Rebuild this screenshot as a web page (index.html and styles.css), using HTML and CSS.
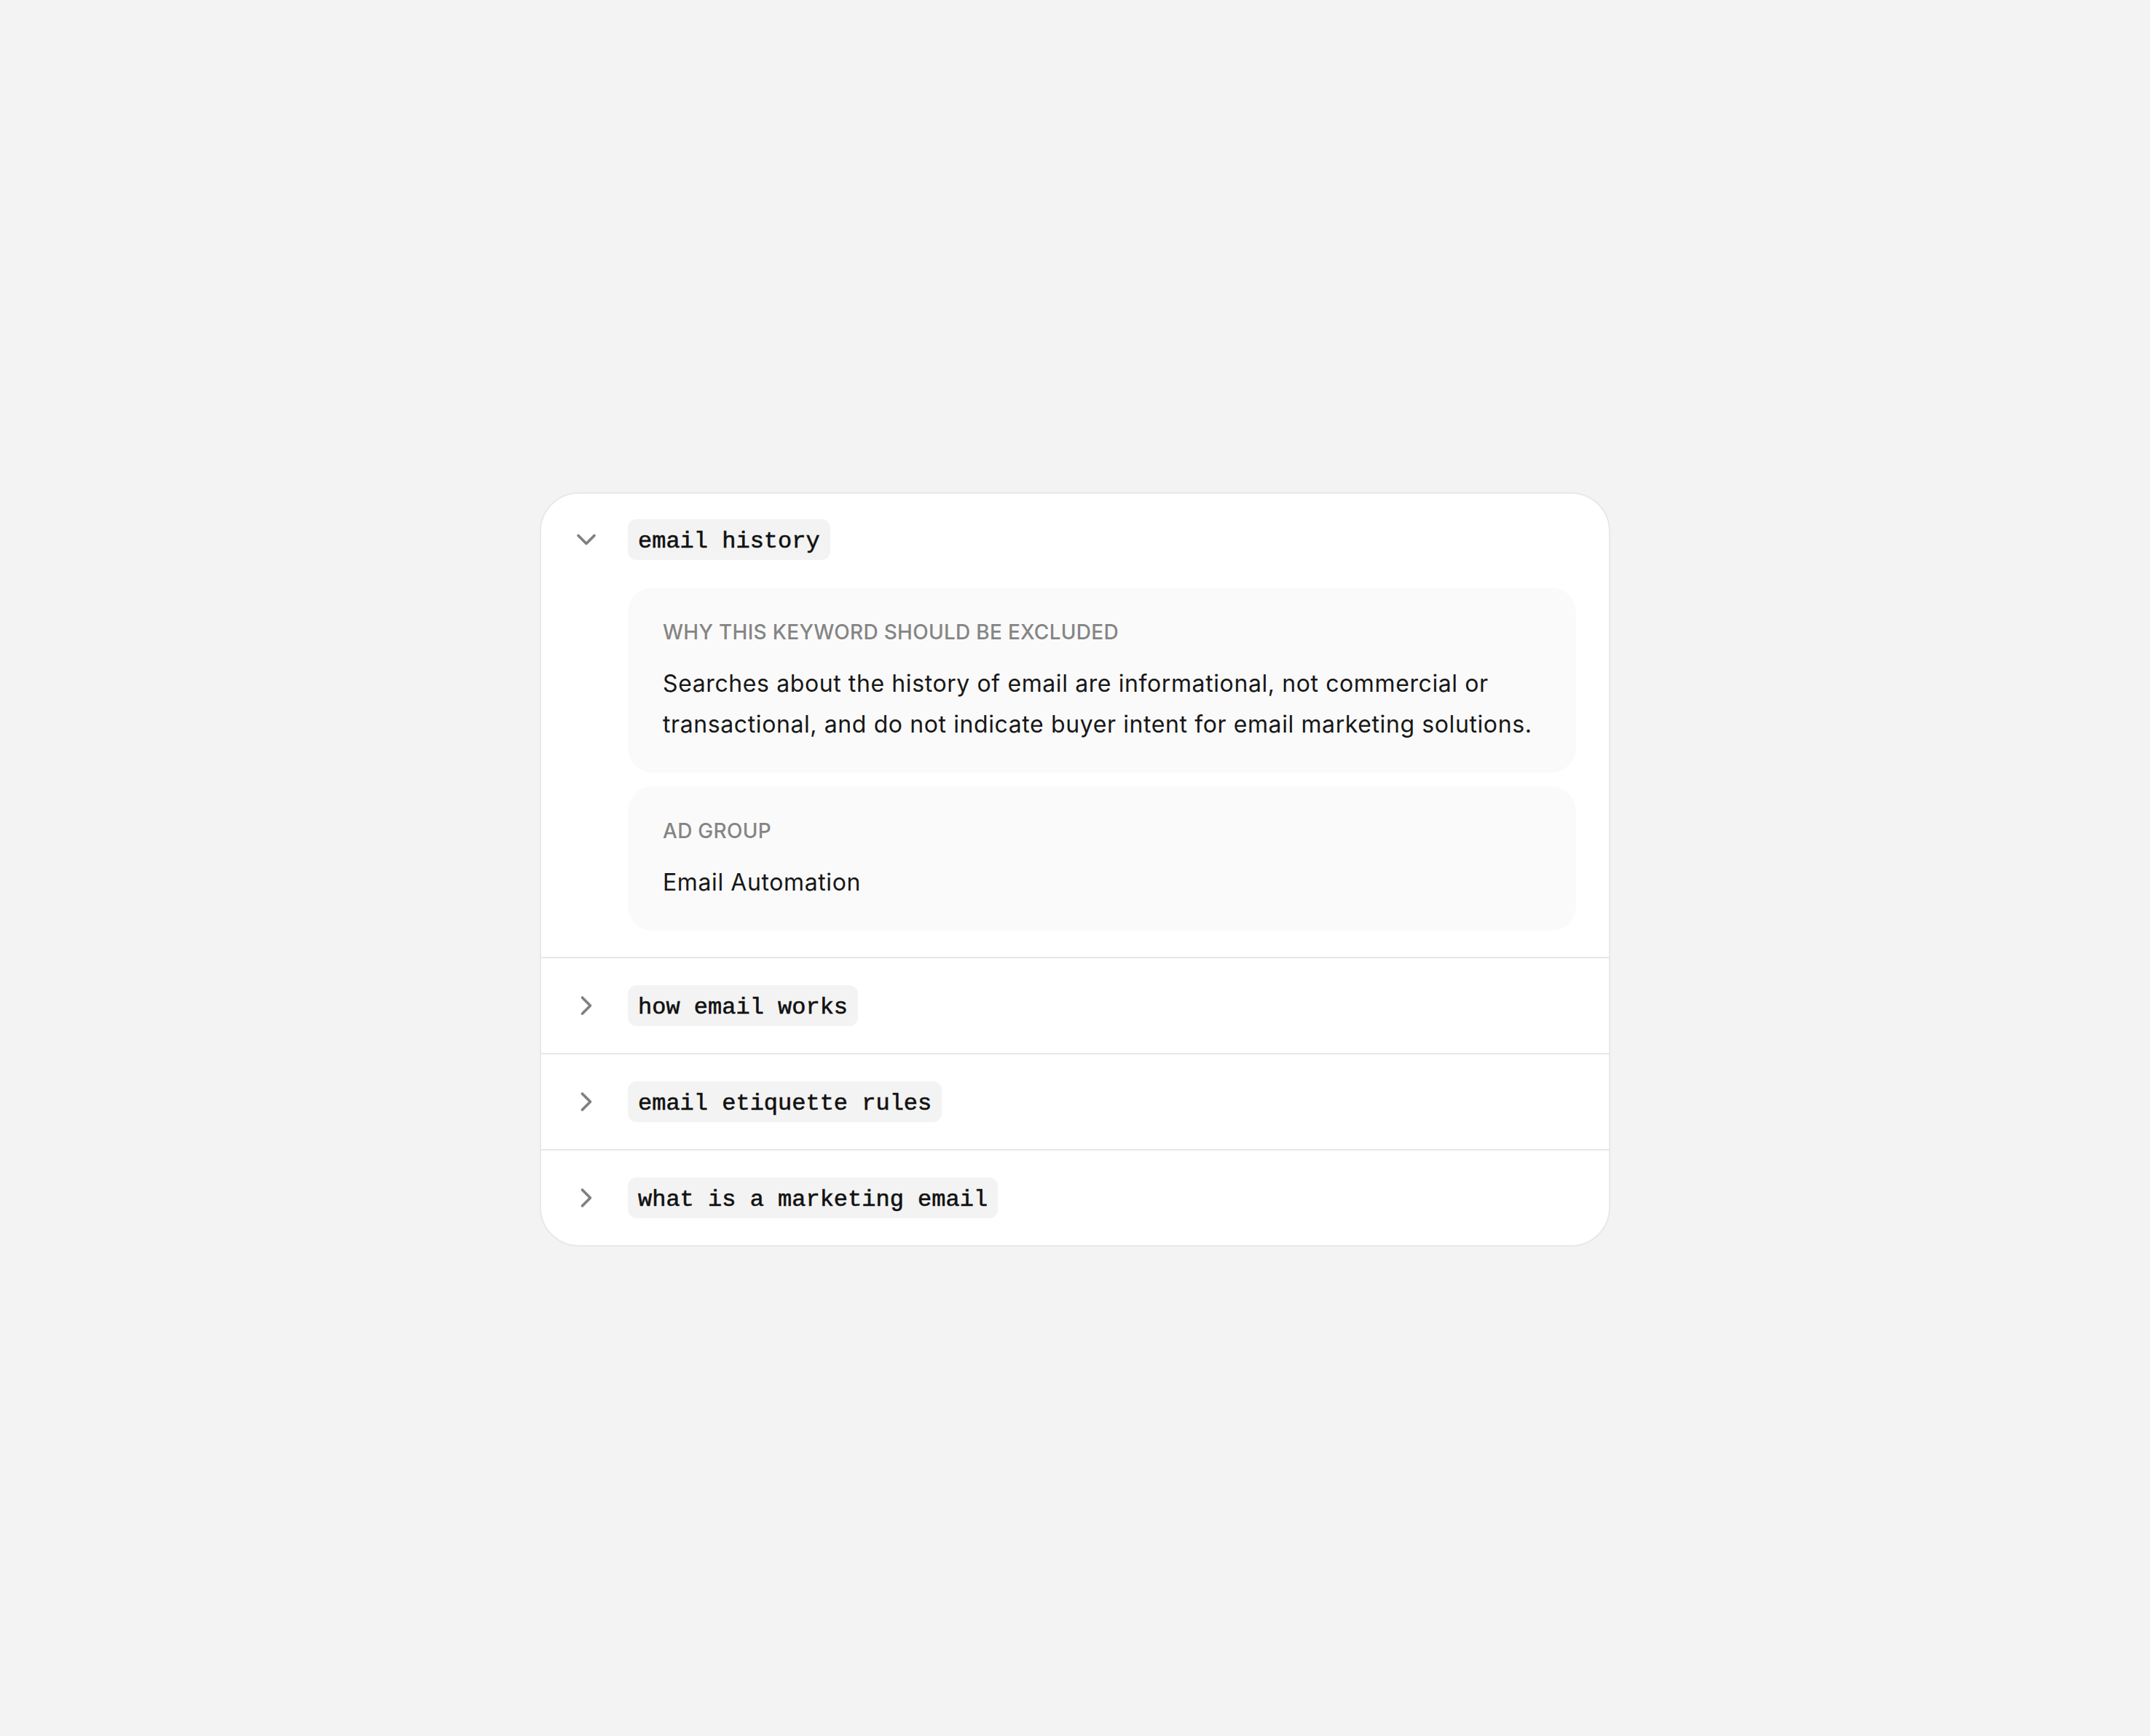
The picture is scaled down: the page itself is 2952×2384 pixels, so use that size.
FILE: index.html
```html
<!DOCTYPE html>
<html lang="en">
<head>
<meta charset="utf-8">
<title>Excluded keywords</title>
<link rel="stylesheet" href="styles.css">
</head>
<body>
<main class="page">
  <section class="card">
    <div class="row row-open">
      <span class="chev"><svg viewBox="0 0 24 24" width="44" height="44" fill="none" stroke="currentColor" stroke-width="2" stroke-linecap="round" stroke-linejoin="round"><path d="m6 9 6 6 6-6"/></svg></span>
      <div class="head"><code class="kw">email history</code></div>
      <div class="details">
        <div class="box">
          <div class="label">Why this keyword should be excluded</div>
          <p class="text">Searches about the history of email are informational, not commercial or transactional, and do not indicate buyer intent for email marketing solutions.</p>
        </div>
        <div class="box">
          <div class="label">Ad group</div>
          <p class="text">Email Automation</p>
        </div>
      </div>
    </div>
    <div class="row">
      <span class="chev"><svg viewBox="0 0 24 24" width="44" height="44" fill="none" stroke="currentColor" stroke-width="2" stroke-linecap="round" stroke-linejoin="round"><path d="m9 18 6-6-6-6"/></svg></span>
      <div class="head"><code class="kw">how email works</code></div>
    </div>
    <div class="row">
      <span class="chev"><svg viewBox="0 0 24 24" width="44" height="44" fill="none" stroke="currentColor" stroke-width="2" stroke-linecap="round" stroke-linejoin="round"><path d="m9 18 6-6-6-6"/></svg></span>
      <div class="head"><code class="kw">email etiquette rules</code></div>
    </div>
    <div class="row">
      <span class="chev"><svg viewBox="0 0 24 24" width="44" height="44" fill="none" stroke="currentColor" stroke-width="2" stroke-linecap="round" stroke-linejoin="round"><path d="m9 18 6-6-6-6"/></svg></span>
      <div class="head"><code class="kw">what is a marketing email</code></div>
    </div>
  </section>
</main>
</body>
</html>
```

FILE: styles.css
```css
* { box-sizing: border-box; }

html, body {
  margin: 0;
  padding: 0;
}

body {
  background: #f3f3f3;
  font-family: Inter, "Noto Sans", "Liberation Sans", sans-serif;
  color: #171717;
}

.page {
  min-height: 100vh;
  display: flex;
  align-items: center;
  justify-content: center;
  padding-top: 3px;
}

.card {
  width: 1470px;
  background: #ffffff;
  border: 2px solid #e8e8e8;
  border-radius: 54px;
  overflow: hidden;
}

.row {
  display: grid;
  grid-template-columns: 44px 1fr;
  column-gap: 35px;
  align-items: center;
  padding: 37px 45px 37px 40px;
  border-top: 2px solid #e8e8e8;
}

.row-open {
  border-top: none;
  padding-top: 35px;
  padding-bottom: 36px;
}

.chev {
  width: 44px;
  height: 44px;
  display: flex;
  align-items: center;
  justify-content: center;
  color: #808080;
}

.chev svg { display: block; }

.head {
  display: flex;
  align-items: center;
}

.kw {
  display: inline-flex;
  align-items: center;
  height: 56px;
  padding: 7px 14px 0;
  background: #f3f3f3;
  border-radius: 12px;
  font-family: "Liberation Mono", "DejaVu Sans Mono", monospace;
  font-size: 32px;
  line-height: 32px;
  color: #111111;
  white-space: pre;
  -webkit-text-stroke: 0.6px #111111;
}

.details {
  grid-column: 2;
  margin-top: 38px;
  display: flex;
  flex-direction: column;
  gap: 19px;
}

.box {
  background: #fafafa;
  border-radius: 34px;
  padding: 38px 48px;
}

.label {
  font-size: 28px;
  line-height: 46px;
  font-weight: 500;
  text-transform: uppercase;
  color: #858585;
  letter-spacing: 0.01em;
}

.text {
  margin: 20px 0 0;
  font-size: 32px;
  line-height: 56px;
  letter-spacing: 0.6px;
  color: #171717;
}
```
